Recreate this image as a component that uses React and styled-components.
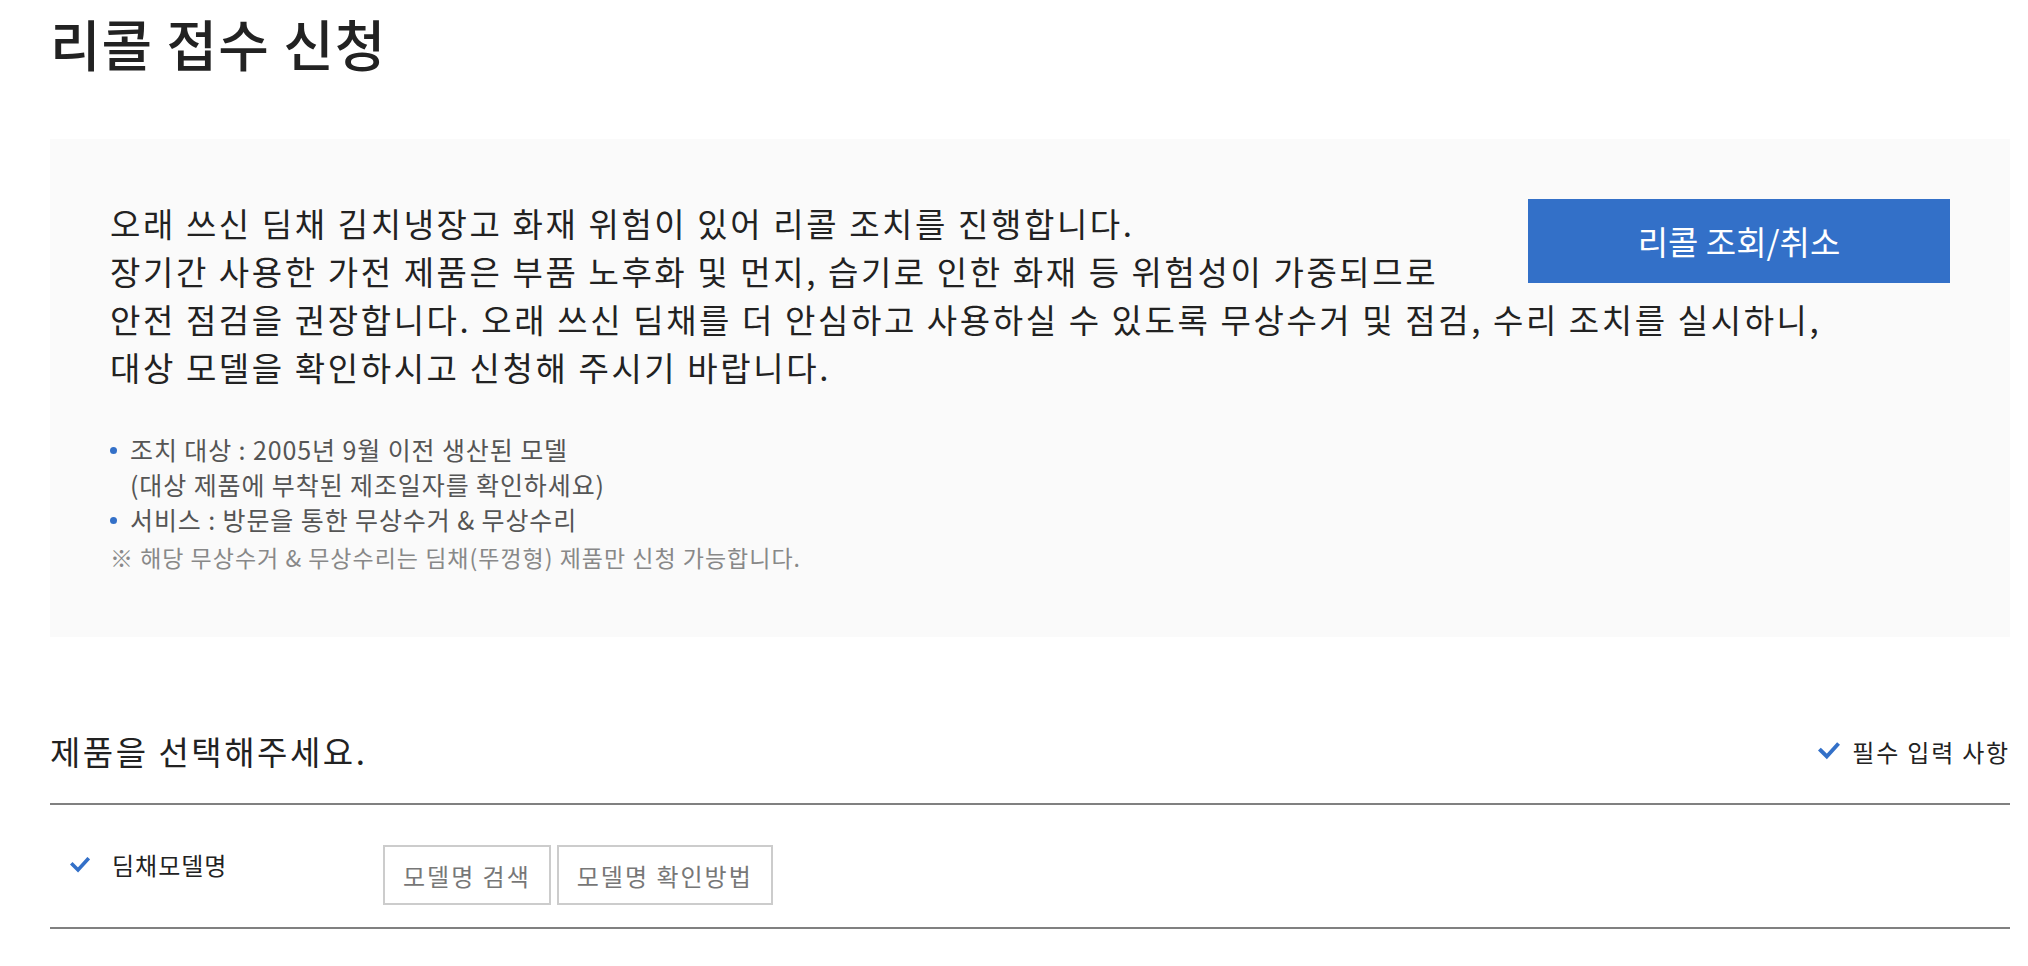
import React from 'react';
import styled, { createGlobalStyle } from 'styled-components';

const GlobalStyle = createGlobalStyle`
  body {
    margin: 0;
    background: #fff;
    font-family: "Noto Sans CJK KR", "Noto Sans", sans-serif;
    color: #222;
  }
`;

const Page = styled.div`
  padding: 0 18px 40px 50px;
`;

const Title = styled.h1`
  margin: 0;
  font-size: 55px;
  line-height: 84px;
  font-weight: 500;
  letter-spacing: 1px;
  color: #222;
`;

const NoticeBox = styled.section`
  margin-top: 55px;
  background: #fafafa;
  padding: 60px 60px 62px 60px;
`;

const NoticeTop = styled.div`
  display: flow-root;
`;

const Lead = styled.p`
  margin: 0;
  font-size: 33px;
  line-height: 48px;
  letter-spacing: 2.6px;
  color: #222;
`;

const RecallButton = styled.button`
  float: right;
  margin-left: 24px;
  width: 422px;
  height: 84px;
  border: none;
  background: #3370c8;
  color: #fff;
  font-family: inherit;
  font-size: 33px;
  cursor: pointer;
`;

const InfoList = styled.ul`
  margin: 41px 0 0;
  padding: 0;
  list-style: none;
  font-size: 25px;
  line-height: 35px;
  letter-spacing: 0.9px;
  color: #555;
`;

const InfoItem = styled.li`
  position: relative;
  padding-left: 20px;

  &::before {
    content: '';
    position: absolute;
    left: 0;
    top: 15px;
    width: 7px;
    height: 7px;
    border-radius: 50%;
    background: #3370c8;
  }
`;

const Note = styled.p`
  margin: 3px 0 0;
  font-size: 23px;
  line-height: 35px;
  letter-spacing: 1px;
  color: #888;
`;

const SectionHead = styled.div`
  display: flex;
  justify-content: space-between;
  align-items: center;
  margin-top: 90px;
  padding-bottom: 28px;
  border-bottom: 2px solid #808080;
`;

const SectionTitle = styled.h2`
  margin: 0;
  font-size: 33px;
  line-height: 48px;
  font-weight: 400;
  letter-spacing: 2.5px;
  color: #222;
`;

const Required = styled.span`
  display: flex;
  align-items: center;
  gap: 12px;
  font-size: 24px;
  letter-spacing: 1.8px;
  color: #222;
`;

const FieldRow = styled.div`
  display: flex;
  align-items: flex-start;
  padding: 40px 0 22px 20px;
  border-bottom: 2px solid #808080;
`;

const FieldLabel = styled.div`
  display: flex;
  align-items: center;
  gap: 22px;
  width: 313px;
  padding-top: 2px;
  font-size: 24px;
  line-height: 36px;
  letter-spacing: 1px;
  color: #222;
`;

const FieldActions = styled.div`
  display: flex;
  gap: 6px;
`;

const OutlineButton = styled.button`
  height: 60px;
  padding: 0 18px;
  border: 2px solid #ccc;
  background: #fff;
  color: #777;
  font-family: inherit;
  font-size: 24px;
  letter-spacing: 2px;
  cursor: pointer;
`;

const Check = ({ size = 14 }) => (
  <svg width={size} height={Math.round(size * 0.8)} viewBox="0 0 20 16" fill="none">
    <path d="M2.5 7.5 L8 13 L17.5 2.5" stroke="#3370c8" strokeWidth="3.6" strokeLinecap="square" />
  </svg>
);

export default function App() {
  return (
    <Page>
      <GlobalStyle />
      <Title>리콜 접수 신청</Title>

      <NoticeBox>
        <NoticeTop>
          <RecallButton>리콜 조회/취소</RecallButton>
          <Lead>
            오래 쓰신 딤채 김치냉장고 화재 위험이 있어 리콜 조치를 진행합니다.
            <br />
            장기간 사용한 가전 제품은 부품 노후화 및 먼지, 습기로 인한 화재 등 위험성이 가중되므로
            <br />
            안전 점검을 권장합니다. 오래 쓰신 딤채를 더 안심하고 사용하실 수 있도록 무상수거 및 점검, 수리 조치를 실시하니,
            <br />
            대상 모델을 확인하시고 신청해 주시기 바랍니다.
          </Lead>
        </NoticeTop>
        <InfoList>
          <InfoItem>
            조치 대상 : 2005년 9월 이전 생산된 모델
            <br />
            (대상 제품에 부착된 제조일자를 확인하세요)
          </InfoItem>
          <InfoItem>서비스 : 방문을 통한 무상수거 &amp; 무상수리</InfoItem>
        </InfoList>
        <Note>※ 해당 무상수거 &amp; 무상수리는 딤채(뚜껑형) 제품만 신청 가능합니다.</Note>
      </NoticeBox>

      <SectionHead>
        <SectionTitle>제품을 선택해주세요.</SectionTitle>
        <Required>
          <Check size={22} />
          필수 입력 사항
        </Required>
      </SectionHead>

      <FieldRow>
        <FieldLabel>
          <Check size={20} />
          딤채모델명
        </FieldLabel>
        <FieldActions>
          <OutlineButton>모델명 검색</OutlineButton>
          <OutlineButton>모델명 확인방법</OutlineButton>
        </FieldActions>
      </FieldRow>
    </Page>
  );
}
